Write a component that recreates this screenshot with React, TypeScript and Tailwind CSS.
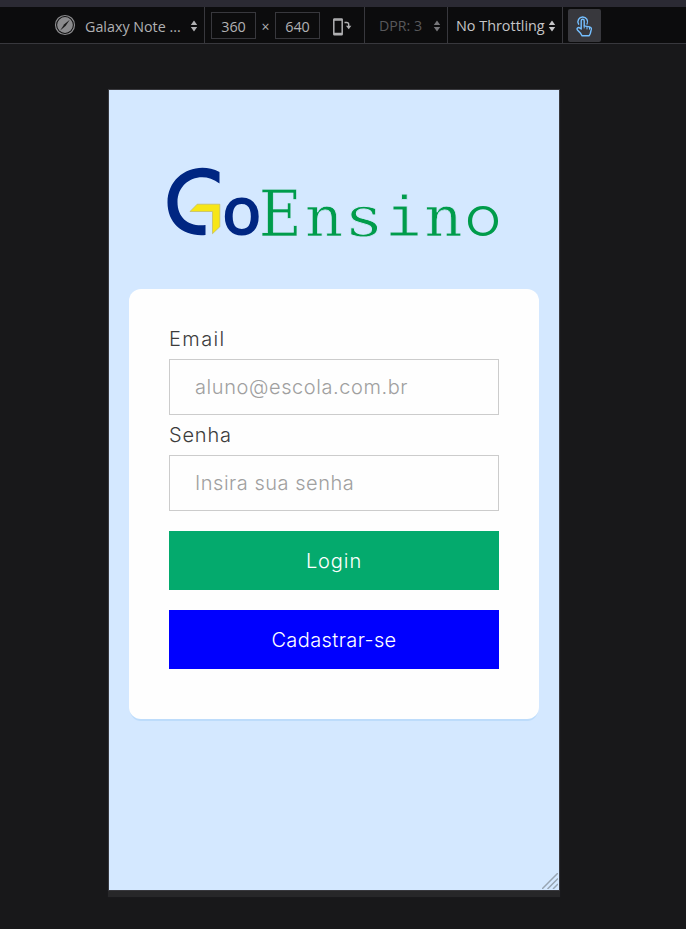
import type { ReactNode } from "react";

const ui = "font-['Open_Sans','Noto_Sans',sans-serif]";

function Arrows({ className = "" }: { className?: string }) {
  return (
    <svg className={`mt-[2px] ${className}`} width="8" height="12" viewBox="0 0 8 12" fill="currentColor">
      <path d="M4 .5 7.2 5H.8zM4 11.5.8 7h6.4z" />
    </svg>
  );
}

function SizeBox({ children }: { children: ReactNode }) {
  return (
    <div className="flex h-[27px] w-[45px] items-center justify-center border border-[#38383d] pt-[3px] text-[#b1b1b3]">
      {children}
    </div>
  );
}

function Toolbar() {
  return (
    <div className={`flex h-[37px] items-stretch border-b border-[#38383d] bg-[#0c0c0d] text-[14.4px] whitespace-nowrap text-[#b1b1b3] ${ui}`}>
      <div className="flex w-[205px] items-center border-r border-[#38383d] pl-[54px]">
        <svg width="22" height="22" viewBox="0 0 22 22" className="shrink-0">
          <circle cx="11" cy="11" r="9.5" fill="none" stroke="#8b8b8d" strokeWidth="1.2" />
          <circle cx="11" cy="11" r="7.9" fill="#8b8b8d" />
          <path d="M15.800 5.800 11.700 11.700 6.200 16.400 10.300 10.300z" fill="#19191a" />
        </svg>
        <span className="ml-[9px] w-[105px] pt-[3px] text-[14.3px]">Galaxy Note ...</span>
        <Arrows />
      </div>
      <div className="flex w-40 items-center border-r border-[#38383d] pl-[6px]">
        <SizeBox>360</SizeBox>
        <span className="w-[19px] pt-[3px] text-center text-sm">×</span>
        <SizeBox>640</SizeBox>
        <svg className="ml-3 mt-[3px]" width="21" height="20" viewBox="0 0 21 20" fill="none" stroke="#b1b1b3">
          <rect x="1.8" y="2" width="8.4" height="15.8" rx=".6" strokeWidth="1.5" />
          <path d="M2 3h8M2 16.500h8" strokeWidth="1.4" />
          <path d="M12.500 5.500h2.200q2 0 2 2V10" strokeWidth="1.4" />
          <path d="M14 8.800h5.400L16.700 12.200z" fill="#b1b1b3" stroke="none" />
        </svg>
      </div>
      <div className="flex w-[83px] items-center border-r border-[#38383d] pl-[14px] text-[#58585b]">
        <span className="w-[54px] pt-[2px] text-[14.2px]">DPR: 3</span>
        <Arrows className="text-[#77777a]" />
      </div>
      <div className="flex w-[115px] items-center border-r border-[#38383d] pl-2 text-[#c5c5c7]">
        <span className="w-[92px] pt-[2px]">No Throttling</span>
        <Arrows />
      </div>
      <div className="ml-[5px] mt-[2px] flex h-[33px] w-[33px] items-center justify-center rounded-[2px] bg-[#38383d]">
        <svg width="19" height="24" viewBox="0 0 19 24" fill="none" stroke="#75bfff" strokeWidth="1.4" strokeLinejoin="round" strokeLinecap="round">
          <path d="M3.6 10.2A4.8 4.8 0 1 1 12 10" />
          <path d="M6.2 15V6.8q0-1.6 1.5-1.6t1.5 1.6v5.1l5.2 1q2.3.5 1.9 2.5l-1 4.1-1.1 2.3H7.1l-1.5-2.5-3.2-3.4q-.9-1.3.3-2.1 1.2-.7 2.3.4z" />
          <path d="M9.2 12v2M12 12.7V15M14.5 13.2v2" strokeWidth="1" />
        </svg>
      </div>
    </div>
  );
}

function Logo() {
  return (
    <svg className="mx-auto block overflow-visible" width="340" height="80" viewBox="164 162 340 80">
      <path d="M219.500 172C196 160 167.500 175 167.500 202.500c0 21 16 34.500 38 32.500v-10C190 227 177.500 219 177.500 202c0-21 23.500-32.500 42-18.500z" fill="#002682" />
      <path d="M190 211.500 197.200 204.200h22.600v22.600l-7.300 6.900v-22.200z" fill="#f7e617" stroke="#bdb765" strokeWidth=".7" />
      <text x="221.500" y="234.500" fontSize="69" fontWeight="550" textLength="40.500" lengthAdjust="spacingAndGlyphs" fill="#002682" className={ui}>o</text>
      <g fill="#009c4b" stroke="#d4e8ff" className="font-['DejaVu_Serif',serif]">
        <text x="258.800" y="235.500" fontSize="63" strokeWidth=".7" textLength="43" lengthAdjust="spacingAndGlyphs">E</text>
        <text x="305" y="235.500" fontSize="55.500" strokeWidth=".7" textLength="38" lengthAdjust="spacingAndGlyphs">n</text>
        <text x="347" y="235.500" fontSize="56" strokeWidth=".9" textLength="34" lengthAdjust="spacingAndGlyphs">s</text>
        <text x="386" y="235.500" fontSize="57" strokeWidth=".8" textLength="35" lengthAdjust="spacingAndGlyphs" className="font-['Liberation_Mono',monospace]">i</text>
        <text x="424.500" y="235.500" fontSize="55.500" strokeWidth=".7" textLength="38" lengthAdjust="spacingAndGlyphs">n</text>
        <text x="464.500" y="235.200" fontSize="53" fontWeight="280" stroke="none" textLength="37" lengthAdjust="spacingAndGlyphs" className="font-['Inter',sans-serif]">o</text>
      </g>
    </svg>
  );
}

const field =
  "block h-14 w-full border border-[#ccc] bg-[#fefefe] px-[25px] text-[#444] outline-none placeholder:text-[#a0a0a0]";

function LoginCard() {
  return (
    <form className="mx-5 mt-[47px] h-[430px] rounded-xl bg-[#fefefe] px-10 pt-[30px] text-[20px] font-[360] shadow-[0_3px_0_-1px_#bddcfb] font-['Inter',sans-serif]">
      <label className="block h-10 leading-[40px] tracking-[1.4px] text-[#3c3c3c]" htmlFor="email">Email</label>
      <input id="email" type="text" placeholder="aluno@escola.com.br" className={`${field} tracking-[0.58px]`} />
      <label className="block h-10 leading-[40px] tracking-[0.8px] text-[#3c3c3c]" htmlFor="senha">Senha</label>
      <input id="senha" type="password" placeholder="Insira sua senha" className={`${field} tracking-[0.52px]`} />
      <button type="button" className="mt-5 block h-[59px] w-full bg-[#04aa6d] tracking-[0.9px] text-white">Login</button>
      <button type="button" className="mt-5 block h-[59px] w-full bg-[#0000ff] tracking-[0.4px] text-white">Cadastrar-se</button>
    </form>
  );
}

export default function App() {
  return (
    <div className="h-[929px] w-[686px] overflow-hidden bg-[#18181a]">
      <div className="h-[7px] bg-[#2b2a33]" />
      <Toolbar />
      <main className="pl-[109px] pt-[46px]">
        <div className="relative h-[800px] w-[450px] bg-[#d4e8ff] pt-[72px] shadow-[0_0_0_1px_#38383d,0_6px_1px_1px_#272729]">
          <Logo />
          <LoginCard />
          <svg className="absolute bottom-px right-px" width="16" height="16" viewBox="0 0 16 16" stroke="#98a5b2" strokeWidth="1.5">
            <path d="M0 16 16 0M5.500 16 16 5.500M11 16l5-5" />
          </svg>
        </div>
      </main>
    </div>
  );
}
